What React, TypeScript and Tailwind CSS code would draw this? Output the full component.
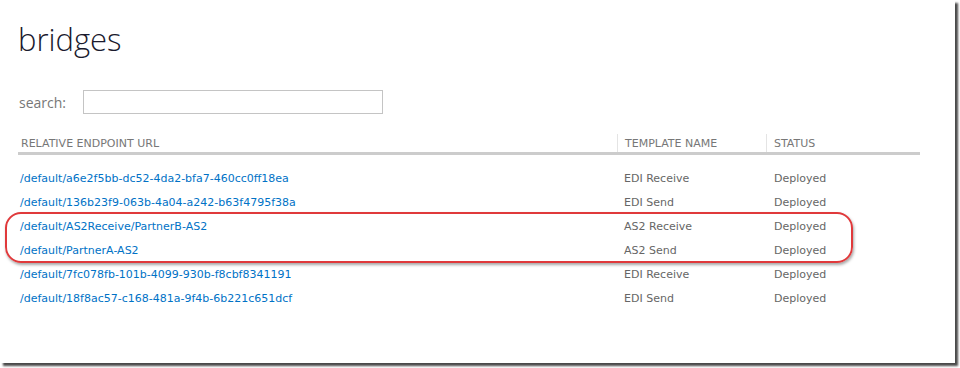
const rows = [
  { url: '/default/a6e2f5bb-dc52-4da2-bfa7-460cc0ff18ea', template: 'EDI Receive', status: 'Deployed' },
  { url: '/default/136b23f9-063b-4a04-a242-b63f4795f38a', template: 'EDI Send', status: 'Deployed' },
  { url: '/default/AS2Receive/PartnerB-AS2', template: 'AS2 Receive', status: 'Deployed' },
  { url: '/default/PartnerA-AS2', template: 'AS2 Send', status: 'Deployed' },
  { url: '/default/7fc078fb-101b-4099-930b-f8cbf8341191', template: 'EDI Receive', status: 'Deployed' },
  { url: '/default/18f8ac57-c168-481a-9f4b-6b221c651dcf', template: 'EDI Send', status: 'Deployed' },
];

export default function App() {
  return (
    <div className="w-[960px] h-[368px] bg-white overflow-hidden">
      {/* screenshot frame with drop shadow */}
      <div className="relative w-[955px] h-[363px] bg-white shadow-[3px_3px_2px_#4a4a4a]">
        <div className="pl-[18px] pt-[18px]">
          <h1 className="text-[31px] leading-[42px] font-light text-[#1a1a2e] font-['Open_Sans',sans-serif]">
            bridges
          </h1>

          {/* search */}
          <div className="flex items-center mt-[30px] ml-[1px]">
            <span className="w-[64px] text-[14px] text-[#777] font-['Open_Sans',sans-serif]">search:</span>
            <div className="w-[300px] h-[24px] border border-[#c4c4c4] bg-white" />
          </div>

          {/* table */}
          <div className="mt-[20px] w-[902px] font-['DejaVu_Sans',Verdana,sans-serif] text-[11px]">
            <div className="flex h-[21px] items-end pb-[0px] border-b-[3px] border-[#cccccc] text-[#777]">
              <div className="w-[599px] pl-[3px]">RELATIVE ENDPOINT URL</div>
              <div className="w-[149px] h-[18px] flex items-end pl-[7px] border-l border-[#e4e4e4]">TEMPLATE NAME</div>
              <div className="flex-1 h-[18px] flex items-end pl-[7px] border-l border-[#e4e4e4]">STATUS</div>
            </div>
            <div className="pt-[12px]">
              {rows.map((r) => (
                <div key={r.url} className="flex h-[24px] items-center">
                  <div className="w-[599px] pl-[2px] text-[#0072c6]">{r.url}</div>
                  <div className="w-[149px] pl-[7px] text-[#666]">{r.template}</div>
                  <div className="flex-1 pl-[8px] text-[#666]">{r.status}</div>
                </div>
              ))}
            </div>
          </div>
        </div>

        {/* red highlight annotation */}
        <div className="absolute left-[5px] top-[212px] w-[848px] h-[51px] rounded-[16px] border-2 border-[#e0393b] shadow-[1px_2px_3px_rgba(0,0,0,0.35)]" />
      </div>
    </div>
  );
}
